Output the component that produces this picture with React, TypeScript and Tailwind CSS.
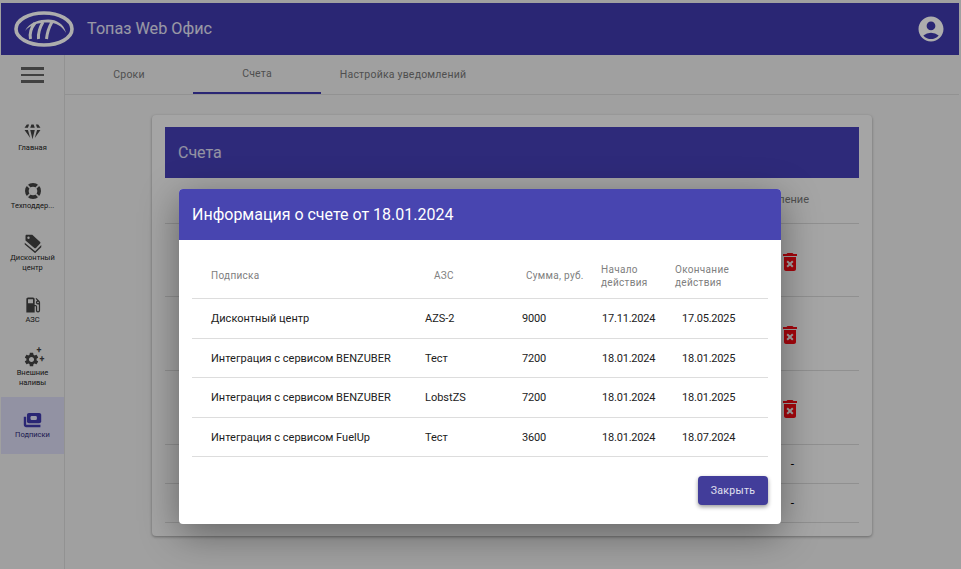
import React from 'react';
import { MdAccountCircle, MdDeleteForever, MdLocalGasStation, MdSettings } from 'react-icons/md';

const Logo = () => (
  <svg width="60" height="36" viewBox="0 0 60 36" className="shrink-0">
    <ellipse cx="30" cy="18" rx="28" ry="16" fill="none" stroke="#fff" strokeWidth="3.6" />
    <path d="M11 20 C15 11 26 8.5 34 8.5 C43 8.5 50 13 52 22 C48 15 42 11.5 34 11.5 C25 11.5 16 13.5 11 20Z" fill="#fff" />
    <path d="M21 12 C17 17 15.5 23 16.5 28" fill="none" stroke="#fff" strokeWidth="3" />
    <path d="M29 11 C25.5 17 24 23 24.5 28" fill="none" stroke="#fff" strokeWidth="3" />
    <path d="M38 11 C34.5 17 33 23 32.5 28" fill="none" stroke="#fff" strokeWidth="3" />
  </svg>
);

const Gem = () => (
  <svg width="21" height="21" viewBox="0 0 24 24" fill="#424242">
    <path d="M16,9H19L14,16M10,9H14L12,17M5,9H8L10,16M15,4H17L19,7H16M11,4H13L14,7H10M7,4H9L8,7H5L7,4Z" transform="translate(-3.6 -3.6) scale(1.3)" />
  </svg>
);

const Lifebuoy = () => (
  <svg width="20" height="20" viewBox="0 0 24 24" fill="none" stroke="#424242">
    <circle cx="12" cy="12" r="7.4" strokeWidth="4.4" />
    <path d="M5 5L9 9M19 5L15 9M5 19L9 15M19 19L15 15" stroke="#e8e8e8" strokeWidth="2" />
  </svg>
);

const Tags = () => (
  <svg width="18" height="20" viewBox="0 0 24 26" fill="#424242">
    <path d="M2 3.5C2 2.7 2.7 2 3.5 2H11L21.5 11.5C22.2 12.2 22.2 13 21.5 13.8L16 19.5C15.3 20.2 14.4 20.2 13.7 19.5L2 9.5V3.5Z" />
    <circle cx="6" cy="6" r="1.6" fill="#e8e8e8" />
    <path d="M1 12.5L14.8 24L23 15.5V18.5L14.8 26.5L1 15Z" />
  </svg>
);

const Cards = () => (
  <svg width="19" height="18" viewBox="0 0 24 22">
    <path d="M4 17H22V20H4C2.4 20 1 18.6 1 17V7H4Z" fill="#3e39ac" />
    <rect x="5" y="2" width="18" height="13" rx="2.5" fill="#3e39ac" />
    <rect x="9.5" y="6" width="8" height="5" rx="1.5" fill="#e4e4f8" />
  </svg>
);

const CogPlus = () => (
  <div className="relative h-[18px] w-[20px]">
    <MdSettings size={17} color="#424242" className="absolute bottom-[-1px] left-0" />
    <span className="absolute right-[1px] top-[-3px] text-[9px] font-bold leading-none text-[#424242]">+</span>
    <span className="absolute bottom-[3px] right-[-2px] text-[9px] font-bold leading-none text-[#424242]">+</span>
  </div>
);

const navItems = [
  { label: ['Главная'], icon: <Gem /> },
  { label: ['Техподдер...'], icon: <Lifebuoy /> },
  { label: ['Дисконтный', 'центр'], icon: <Tags /> },
  { label: ['АЗС'], icon: <MdLocalGasStation size={20} color="#424242" /> },
  { label: ['Внешние', 'наливы'], icon: <CogPlus /> },
  { label: ['Подписки'], icon: <Cards />, active: true },
];

const backgroundRows = [
  { h: 'h-[73px]', del: true },
  { h: 'h-[74px]', del: true },
  { h: 'h-[74px]', del: true },
  { h: 'h-[39px]', del: false },
  { h: 'h-[39px]', del: false },
];

const invoiceRows = [
  { name: 'Дисконтный центр', station: 'AZS-2', sum: '9000', from: '17.11.2024', to: '17.05.2025' },
  { name: 'Интеграция с сервисом BENZUBER', station: 'Тест', sum: '7200', from: '18.01.2024', to: '18.01.2025' },
  { name: 'Интеграция с сервисом BENZUBER', station: 'LobstZS', sum: '7200', from: '18.01.2024', to: '18.01.2025' },
  { name: 'Интеграция с сервисом FuelUp', station: 'Тест', sum: '3600', from: '18.01.2024', to: '18.07.2024' },
];

export default function App() {
  return (
    <div className="relative h-[569px] w-[961px] overflow-hidden bg-[#ececec] pl-px pr-[2px] pt-[3px] font-['Roboto',sans-serif]">
      <header className="flex h-[52px] items-center bg-[#3e39ac] pl-[13px] pr-[13px]">
        <Logo />
        <span className="ml-[13px] text-[16.2px] text-white/85">Топаз Web Офис</span>
        <MdAccountCircle size={30} color="#fff" className="ml-auto" />
      </header>

      <div className="flex h-[514px]">
        <aside className="box-content w-[63px] shrink-0 border-r border-[#d8d8d8]">
          <div className="flex h-[55px] items-start justify-center pt-[11px]">
            <div className="flex w-[23px] flex-col gap-[4px] pt-[1px]">
              <span className="h-[2.5px] bg-[#616161]" />
              <span className="h-[2.5px] bg-[#616161]" />
              <span className="h-[2.5px] bg-[#616161]" />
            </div>
          </div>
          {navItems.map((item) => (
            <div
              key={item.label[0]}
              className={`flex h-[57.4px] flex-col items-center justify-center text-center text-[7.5px] leading-[10px] ${item.active ? 'bg-[#d8d8f0] text-[#2a2675]' : 'text-[#222222]'}`}
            >
              <div className="mb-[1px] flex h-[18px] items-center">{item.icon}</div>
              {item.label.map((line) => (
                <span key={line}>{line}</span>
              ))}
            </div>
          ))}
        </aside>

        <main className="flex-1">
          <nav className="flex h-[40px] border-b border-[#d8d8d8] text-[10.5px] tracking-[0.2px] text-[#757575]">
            <div className="flex w-[128px] items-center justify-center">Сроки</div>
            <div className="flex w-[128px] items-center justify-center border-b-2 border-[#3e39ac]">Счета</div>
            <div className="flex w-[164px] items-center justify-center">Настройка уведомлений</div>
          </nav>

          <section className="ml-[87px] mt-[20px] h-[421px] w-[720px] rounded bg-[#f3f3f3] px-[13px] pt-[12px] shadow-[0_1px_3px_rgba(0,0,0,0.35)]">
            <div className="flex h-[51px] items-center bg-[#443fb4] pl-[13px] text-[16px] text-white/80">Счета</div>
            <div className="flex h-[46px] items-center justify-end border-b border-[#d4d4d4] pr-[50px] text-[11px] text-[#757575]">Удаление</div>
            {backgroundRows.map((row, i) => (
              <div key={i} className={`flex items-center justify-end border-b border-[#d4d4d4] pr-[65px] ${row.h}`}>
                {row.del ? (
                  <MdDeleteForever size={24} color="#f60a14" className="mr-[-8px] mt-[3px]" />
                ) : (
                  <span className="text-[12px] text-black">-</span>
                )}
              </div>
            ))}
          </section>
        </main>
      </div>

      <div className="absolute inset-0 bg-black/32">
        <div className="absolute left-[179px] top-[189px] h-[335px] w-[602px] overflow-hidden rounded bg-white shadow-[0_10px_38px_rgba(0,0,0,0.4)]">
          <div className="flex h-[51px] items-center bg-[#4845b0] pl-[13px] text-[16px] text-white">
            Информация о счете от 18.01.2024
          </div>

          <div className="mx-[13px] mt-[12px]">
            <div className="grid h-[47px] grid-cols-[242px_92px_75px_74px_93px] items-center border-b border-[#dddddd] text-[10px] leading-[13px] tracking-[0.3px] text-[#808080]">
              <span className="pl-[19px]">Подписка</span>
              <span>АЗС</span>
              <span>Сумма, руб.</span>
              <span className="pt-[2px]">Начало<br />действия</span>
              <span className="pt-[2px]">Окончание<br />действия</span>
            </div>
            {invoiceRows.map((row, i) => (
              <div key={i} className="grid h-[39.5px] grid-cols-[233px_97px_80px_80px_86px] items-center border-b border-[#dddddd] pt-[2px] text-[11px] text-[#212121]">
                <span className="pl-[19px]">{row.name}</span>
                <span>{row.station}</span>
                <span className="tracking-[-0.2px]">{row.sum}</span>
                <span className="tracking-[-0.2px]">{row.from}</span>
                <span className="tracking-[-0.2px]">{row.to}</span>
              </div>
            ))}
          </div>

          <div className="mr-[13px] mt-[19px] flex justify-end">
            <button className="h-[29px] w-[70px] rounded bg-[#423d9a] text-[10.5px] tracking-[0.3px] text-white/85 shadow-[0_2px_4px_rgba(0,0,0,0.4)]">
              Закрыть
            </button>
          </div>
        </div>
      </div>
    </div>
  );
}
